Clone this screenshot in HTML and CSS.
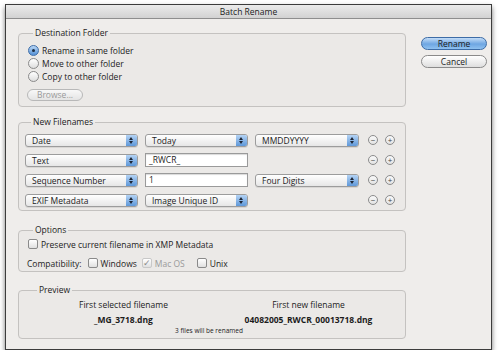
FILE: index.html
```html
<!DOCTYPE html>
<html lang="en">
<head>
    <meta charset="UTF-8">
    <title>Batch Rename</title>
    <link rel="stylesheet" href="styles.css">
</head>
<body>
    <div class="window">
        <div class="titlebar">Batch Rename</div>

        <div class="content">
            <div class="main">
                <!-- Destination -->
                <fieldset class="group dest">
                    <legend>Destination Folder</legend>
                    <div class="radio-row"><span class="radio checked"></span>Rename in same folder</div>
                    <div class="radio-row"><span class="radio"></span>Move to other folder</div>
                    <div class="radio-row"><span class="radio"></span>Copy to other folder</div>
                    <button class="browse-btn" disabled>Browse...</button>
                </fieldset>

                <!-- New filenames -->
                <fieldset class="group names">
                    <legend>New Filenames</legend>
                    <div class="name-grid">
                        <div class="popup">Date<span class="stepper"></span></div>
                        <div class="popup">Today<span class="stepper"></span></div>
                        <div class="popup">MMDDYYYY<span class="stepper"></span></div>
                        <div class="plusminus"><span class="circle">&minus;</span><span class="circle">+</span></div>

                        <div class="popup">Text<span class="stepper"></span></div>
                        <div class="field">_RWCR_</div>
                        <div></div>
                        <div class="plusminus"><span class="circle">&minus;</span><span class="circle">+</span></div>

                        <div class="popup">Sequence Number<span class="stepper"></span></div>
                        <div class="field">1</div>
                        <div class="popup">Four Digits<span class="stepper"></span></div>
                        <div class="plusminus"><span class="circle">&minus;</span><span class="circle">+</span></div>

                        <div class="popup">EXIF Metadata<span class="stepper"></span></div>
                        <div class="popup">Image Unique ID<span class="stepper"></span></div>
                        <div></div>
                        <div class="plusminus"><span class="circle">&minus;</span><span class="circle">+</span></div>
                    </div>
                </fieldset>

                <!-- Options -->
                <fieldset class="group options">
                    <legend>Options</legend>
                    <div class="check-row"><span class="checkbox"></span>Preserve current filename in XMP Metadata</div>
                    <div class="check-row">
                        <span class="compat-label">Compatibility:</span>
                        <span class="checkbox"></span>Windows
                        <span class="checkbox disabled">&#10003;</span><span class="muted">Mac OS</span>
                        <span class="checkbox"></span>Unix
                    </div>
                </fieldset>

                <!-- Preview -->
                <fieldset class="group preview">
                    <legend>Preview</legend>
                    <div class="preview-cols">
                        <div class="preview-col">
                            <div>First selected filename</div>
                            <div class="filename">_MG_3718.dng</div>
                        </div>
                        <div class="preview-col">
                            <div>First new filename</div>
                            <div class="filename">04082005_RWCR_00013718.dng</div>
                        </div>
                    </div>
                    <div class="count">3 files will be renamed</div>
                </fieldset>
            </div>

            <div class="side">
                <button class="btn btn-default">Rename</button>
                <button class="btn">Cancel</button>
            </div>
        </div>
    </div>
</body>
</html>
```

FILE: styles.css
```css
body {
    margin: 0;
    background-color: #fff;
    font-family: "Open Sans", Arial, sans-serif;
    font-size: 8.5px;
    color: #1c1c1c;
}

.window {
    margin: 4px 0 0 5px;
    width: 485px;
    height: 344px;
    border: 1px solid #3c3c3c;
    background-color: #efedeb;
    box-shadow: 0 3px 5px rgba(0, 0, 0, 0.55);
}

.titlebar {
    height: 13px;
    line-height: 13px;
    text-align: center;
    border-bottom: 1px solid #8e8e8e;
    background: linear-gradient(#ebebeb, #d2d2d2);
    font-size: 8.5px;
}

.content {
    display: flex;
    padding: 8px 3px 0 12px;
    gap: 15px;
}

.main {
    width: 388px;
}

.side {
    width: 66px;
    display: flex;
    flex-direction: column;
    gap: 5px;
    padding-top: 10px;
}

/* group boxes */
.group {
    margin: 0;
    padding: 0 4px 0 8px;
    border: 1px solid #c4c2c0;
    border-radius: 4px;
    background-color: rgba(0, 0, 0, 0.015);
}

.group legend {
    padding: 0 2px;
    margin-left: 6px;
    line-height: 12px;
}

.dest {
    padding-top: 5px;
    padding-bottom: 5px;
}

.names {
    margin-top: 9px;
    padding: 5px 4px 3px 6px;
}

.options {
    margin-top: 13px;
    padding-top: 2px;
    padding-bottom: 2px;
}

.preview {
    margin-top: 12px;
    padding: 3px 4px 2px 12px;
}

/* radios */
.radio-row {
    display: flex;
    align-items: center;
    height: 13px;
}

.radio {
    width: 9px;
    height: 9px;
    border: 1px solid #8a8a8a;
    border-radius: 50%;
    background: linear-gradient(#fff, #dedede);
    margin: 0 3px 0 1px;
    position: relative;
}

.radio.checked {
    border-color: #3f6ea8;
    background: linear-gradient(#b8d6f5, #5591d6);
}

.radio.checked::after {
    content: "";
    position: absolute;
    left: 3px;
    top: 3px;
    width: 3px;
    height: 3px;
    border-radius: 50%;
    background-color: #1d2c40;
}

.browse-btn {
    display: block;
    margin-top: 6px;
    width: 56px;
    height: 12px;
    padding: 0;
    border: 1px solid #b8b8b8;
    border-radius: 6px;
    background: linear-gradient(#f8f8f8, #e4e4e4);
    color: #9a9a9a;
    font-family: inherit;
    font-size: 8.5px;
    line-height: 10px;
}

/* filename rows */
.name-grid {
    display: grid;
    grid-template-columns: 113px 103px 104px auto;
    grid-auto-rows: 14px;
    column-gap: 7px;
    row-gap: 6px;
    align-items: center;
}

.popup {
    position: relative;
    height: 11px;
    line-height: 11px;
    padding-left: 6px;
    border: 1px solid #9c9c9c;
    border-radius: 3px;
    background: linear-gradient(#ffffff, #e6e6e6);
    box-shadow: 0 1px 0 rgba(0, 0, 0, 0.08);
}

.stepper {
    position: absolute;
    right: 0;
    top: 0;
    width: 11px;
    height: 11px;
    border-radius: 0 2px 2px 0;
    background: linear-gradient(#b4d3f4, #5f98d9);
}

.stepper::before,
.stepper::after {
    content: "";
    position: absolute;
    left: 3px;
    border-left: 2.5px solid transparent;
    border-right: 2.5px solid transparent;
}

.stepper::before {
    top: 2px;
    border-bottom: 3px solid #1d2636;
}

.stepper::after {
    bottom: 2px;
    border-top: 3px solid #1d2636;
}

.field {
    height: 12px;
    line-height: 12px;
    padding-left: 3px;
    border: 1px solid #9a9a9a;
    background-color: #fff;
    box-shadow: inset 0 1px 1px rgba(0, 0, 0, 0.15);
}

.plusminus {
    display: flex;
    gap: 7px;
    padding-left: 2px;
}

.circle {
    width: 8px;
    height: 8px;
    border: 1px solid #8c8c8c;
    border-radius: 50%;
    background: linear-gradient(#fafafa, #e2e2e2);
    font-size: 8px;
    line-height: 8px;
    text-align: center;
    color: #444;
}

/* options */
.check-row {
    display: flex;
    align-items: center;
    height: 12px;
}

.check-row + .check-row {
    margin-top: 7px;
}

.checkbox {
    width: 8px;
    height: 8px;
    border: 1px solid #8a8a8a;
    border-radius: 2px;
    background: linear-gradient(#fff, #e0e0e0);
    margin: 0 3px 0 4px;
    font-size: 9px;
    line-height: 8px;
    text-align: center;
}

.check-row .checkbox:first-child {
    margin-left: 1px;
}

.checkbox.disabled {
    border-color: #c8c8c8;
    color: #8a8a8a;
    margin-left: 5px;
}

.compat-label {
    margin-right: 2px;
}

.muted {
    color: #9a9a9a;
    margin-right: 8px;
}

/* preview */
.preview-cols {
    display: flex;
}

.preview-col {
    flex: 1;
    text-align: center;
    line-height: 12px;
}

.filename {
    margin-top: 3px;
    font-weight: bold;
}

.count {
    text-align: center;
    font-size: 6.5px;
    line-height: 10px;
    margin-right: 14px;
}

/* dialog buttons */
.btn {
    height: 13px;
    padding: 0;
    border: 1px solid #8a8a8a;
    border-radius: 7px;
    background: linear-gradient(#ffffff, #dedede);
    font-family: inherit;
    font-size: 8.5px;
    line-height: 11px;
    color: #1c1c1c;
}

.btn-default {
    border-color: #3d6ca6;
    background: linear-gradient(#c4ddf7, #6ea6e2 55%, #8fc1f0);
}
```
